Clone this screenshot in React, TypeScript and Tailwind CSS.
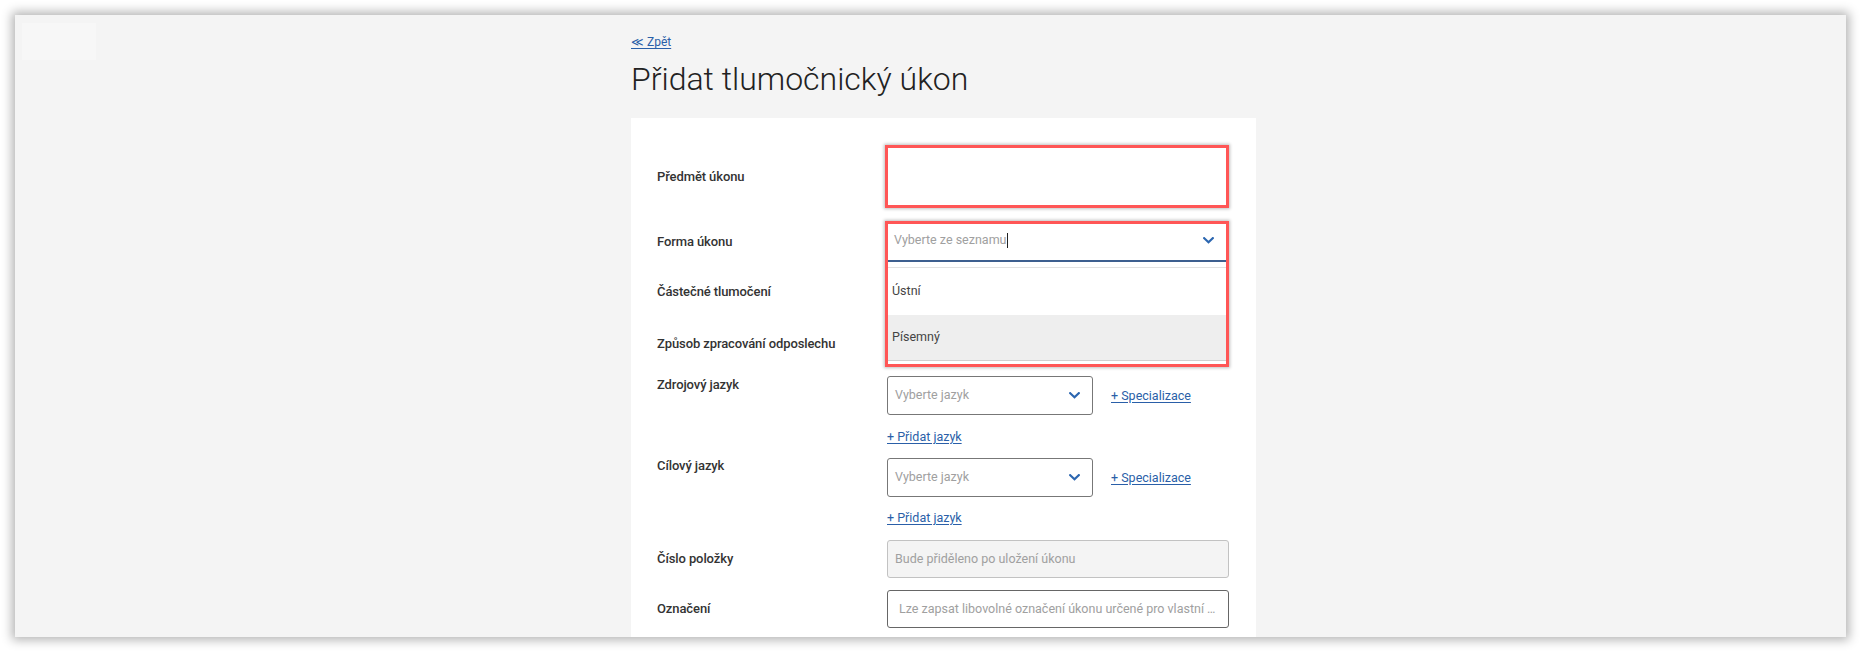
import React from "react";

const Chevron = () => (
  <svg width="11" height="7" viewBox="0 0 11 7" className="shrink-0">
    <path d="M1.2 1.2 L5.5 5.3 L9.8 1.2" fill="none" stroke="#2b66b0" strokeWidth="2.2" strokeLinecap="square" />
  </svg>
);

const Label = ({ children, className = "" }: { children: React.ReactNode; className?: string }) => (
  <div className={`w-[228px] shrink-0 text-[13px] font-medium text-[#333] leading-[20px] tracking-[-0.1px] ${className}`}>{children}</div>
);

const LinkText = ({ children }: { children: React.ReactNode }) => (
  <a href="#" className="block text-[12.5px] leading-[18px] text-[#2a5fa8] underline underline-offset-2">{children}</a>
);

const LangSelect = () => (
  <div className="flex h-[39px] w-[206px] items-center justify-between rounded-[3px] border border-[#777] bg-white pl-[7px] pr-[12px]">
    <span className="text-[12.5px] text-[#a0a0a0]">Vyberte jazyk</span>
    <Chevron />
  </div>
);

export default function App() {
  return (
    <div className="min-h-[652px] w-full bg-white pt-[15px] pl-[15px] pr-[15px]" style={{ fontFamily: "Roboto, 'Noto Sans', sans-serif" }}>
      <div className="relative h-[622px] w-[1831px] overflow-hidden bg-[#f4f4f4] shadow-[0_0_10px_3px_rgba(0,0,0,0.3)]">
        <div className="absolute left-[7px] top-[8px] h-[37px] w-[74px] bg-[#f7f7f7]" />
        <div className="ml-[616px] w-[625px] pt-[20px]">
          <a href="#" className="block text-[12px] leading-[14px] text-[#2a5fa8] underline underline-offset-2">≪ Zpět</a>
          <h1 className="mt-[10px] text-[32px] font-light leading-[40px] text-[#222]">Přidat tlumočnický úkon</h1>
          <div className="mt-[19px] h-[600px] bg-white pl-[26px] pr-[27px] pt-[27px]">
            {/* Row 1 */}
            <div className="flex h-[63px] items-center">
              <Label>Předmět úkonu</Label>
              <div className="h-[63px] w-[344px] border-[3px] border-[#ff5656] bg-white shadow-[0_0_3px_1px_rgba(0,0,0,0.25)]" />
            </div>
            {/* Row 2 */}
            <div className="mt-[13px] flex h-[41px] items-center">
              <Label>Forma úkonu</Label>
              <div className="relative z-10 h-[41px] w-[344px]">
                <div className="flex h-[41px] items-center justify-between border-b-2 border-r-2 border-b-[#3d5f8f] border-r-[#2a5fa8] bg-white pl-[9px] pr-[13px]">
                  <span className="flex items-center text-[12.5px] text-[#a0a0a0]">
                    Vyberte ze seznamu<span className="ml-[1px] inline-block h-[15px] w-[1px] bg-[#222]" />
                  </span>
                  <Chevron />
                </div>
                <div className="absolute left-0 top-[41px] w-[344px] bg-white">
                  <div className="mt-[5px] border-t border-[#e2e2e2]" />
                  <div className="flex h-[47px] items-center pl-[7px] text-[12.5px] text-[#444]">Ústní</div>
                  <div className="flex h-[45px] items-center bg-[#eeeeee] pl-[7px] text-[12.5px] text-[#444]">Písemný</div>
                  <div className="h-[4px] border-t border-[#d0d0d0] bg-white" />
                </div>
                <div className="pointer-events-none absolute left-0 top-0 h-[146px] w-[344px] border-[3px] border-[#ff5656] shadow-[0_0_3px_1px_rgba(0,0,0,0.25)]" />
              </div>
            </div>
            {/* Row 3 */}
            <div className="mt-[10px] flex h-[40px] items-center">
              <Label>Částečné tlumočení</Label>
            </div>
            {/* Row 4 */}
            <div className="mt-[12px] flex h-[40px] items-center">
              <Label>Způsob zpracování odposlechu</Label>
            </div>
            {/* Row 5 */}
            <div className="mt-[12px] flex items-start">
              <Label className="-mt-[1px]">Zdrojový jazyk</Label>
              <div className="flex flex-col pl-[2px]">
                <div className="flex items-center gap-[18px]">
                  <LangSelect />
                  <LinkText>+ Specializace</LinkText>
                </div>
                <div className="mt-[13px] flex">
                  <LinkText>+ Přidat jazyk</LinkText>
                </div>
              </div>
            </div>
            {/* Row 6 */}
            <div className="mt-[12px] flex items-start">
              <Label className="-mt-[2px]">Cílový jazyk</Label>
              <div className="flex flex-col pl-[2px]">
                <div className="flex items-center gap-[18px]">
                  <LangSelect />
                  <LinkText>+ Specializace</LinkText>
                </div>
                <div className="mt-[12px] flex">
                  <LinkText>+ Přidat jazyk</LinkText>
                </div>
              </div>
            </div>
            {/* Row 7 */}
            <div className="mt-[13px] flex h-[38px] items-center">
              <Label>Číslo položky</Label>
              <div className="ml-[2px] flex h-[38px] w-[342px] items-center rounded-[3px] border border-[#c2c2c2] bg-[#f4f4f4] pl-[7px] text-[12.5px] text-[#a0a0a0]">
                Bude přiděleno po uložení úkonu
              </div>
            </div>
            {/* Row 8 */}
            <div className="mt-[12px] flex h-[38px] items-center">
              <Label>Označení</Label>
              <div className="ml-[2px] flex h-[38px] w-[342px] items-center rounded-[3px] border border-[#666] bg-white pl-[11px] pr-[8px] text-[12.5px] text-[#a0a0a0]">
                <span className="truncate">Lze zapsat libovolné označení úkonu určené pro vlastní evidenci tlumočníka</span>
              </div>
            </div>
          </div>
        </div>
      </div>
    </div>
  );
}
